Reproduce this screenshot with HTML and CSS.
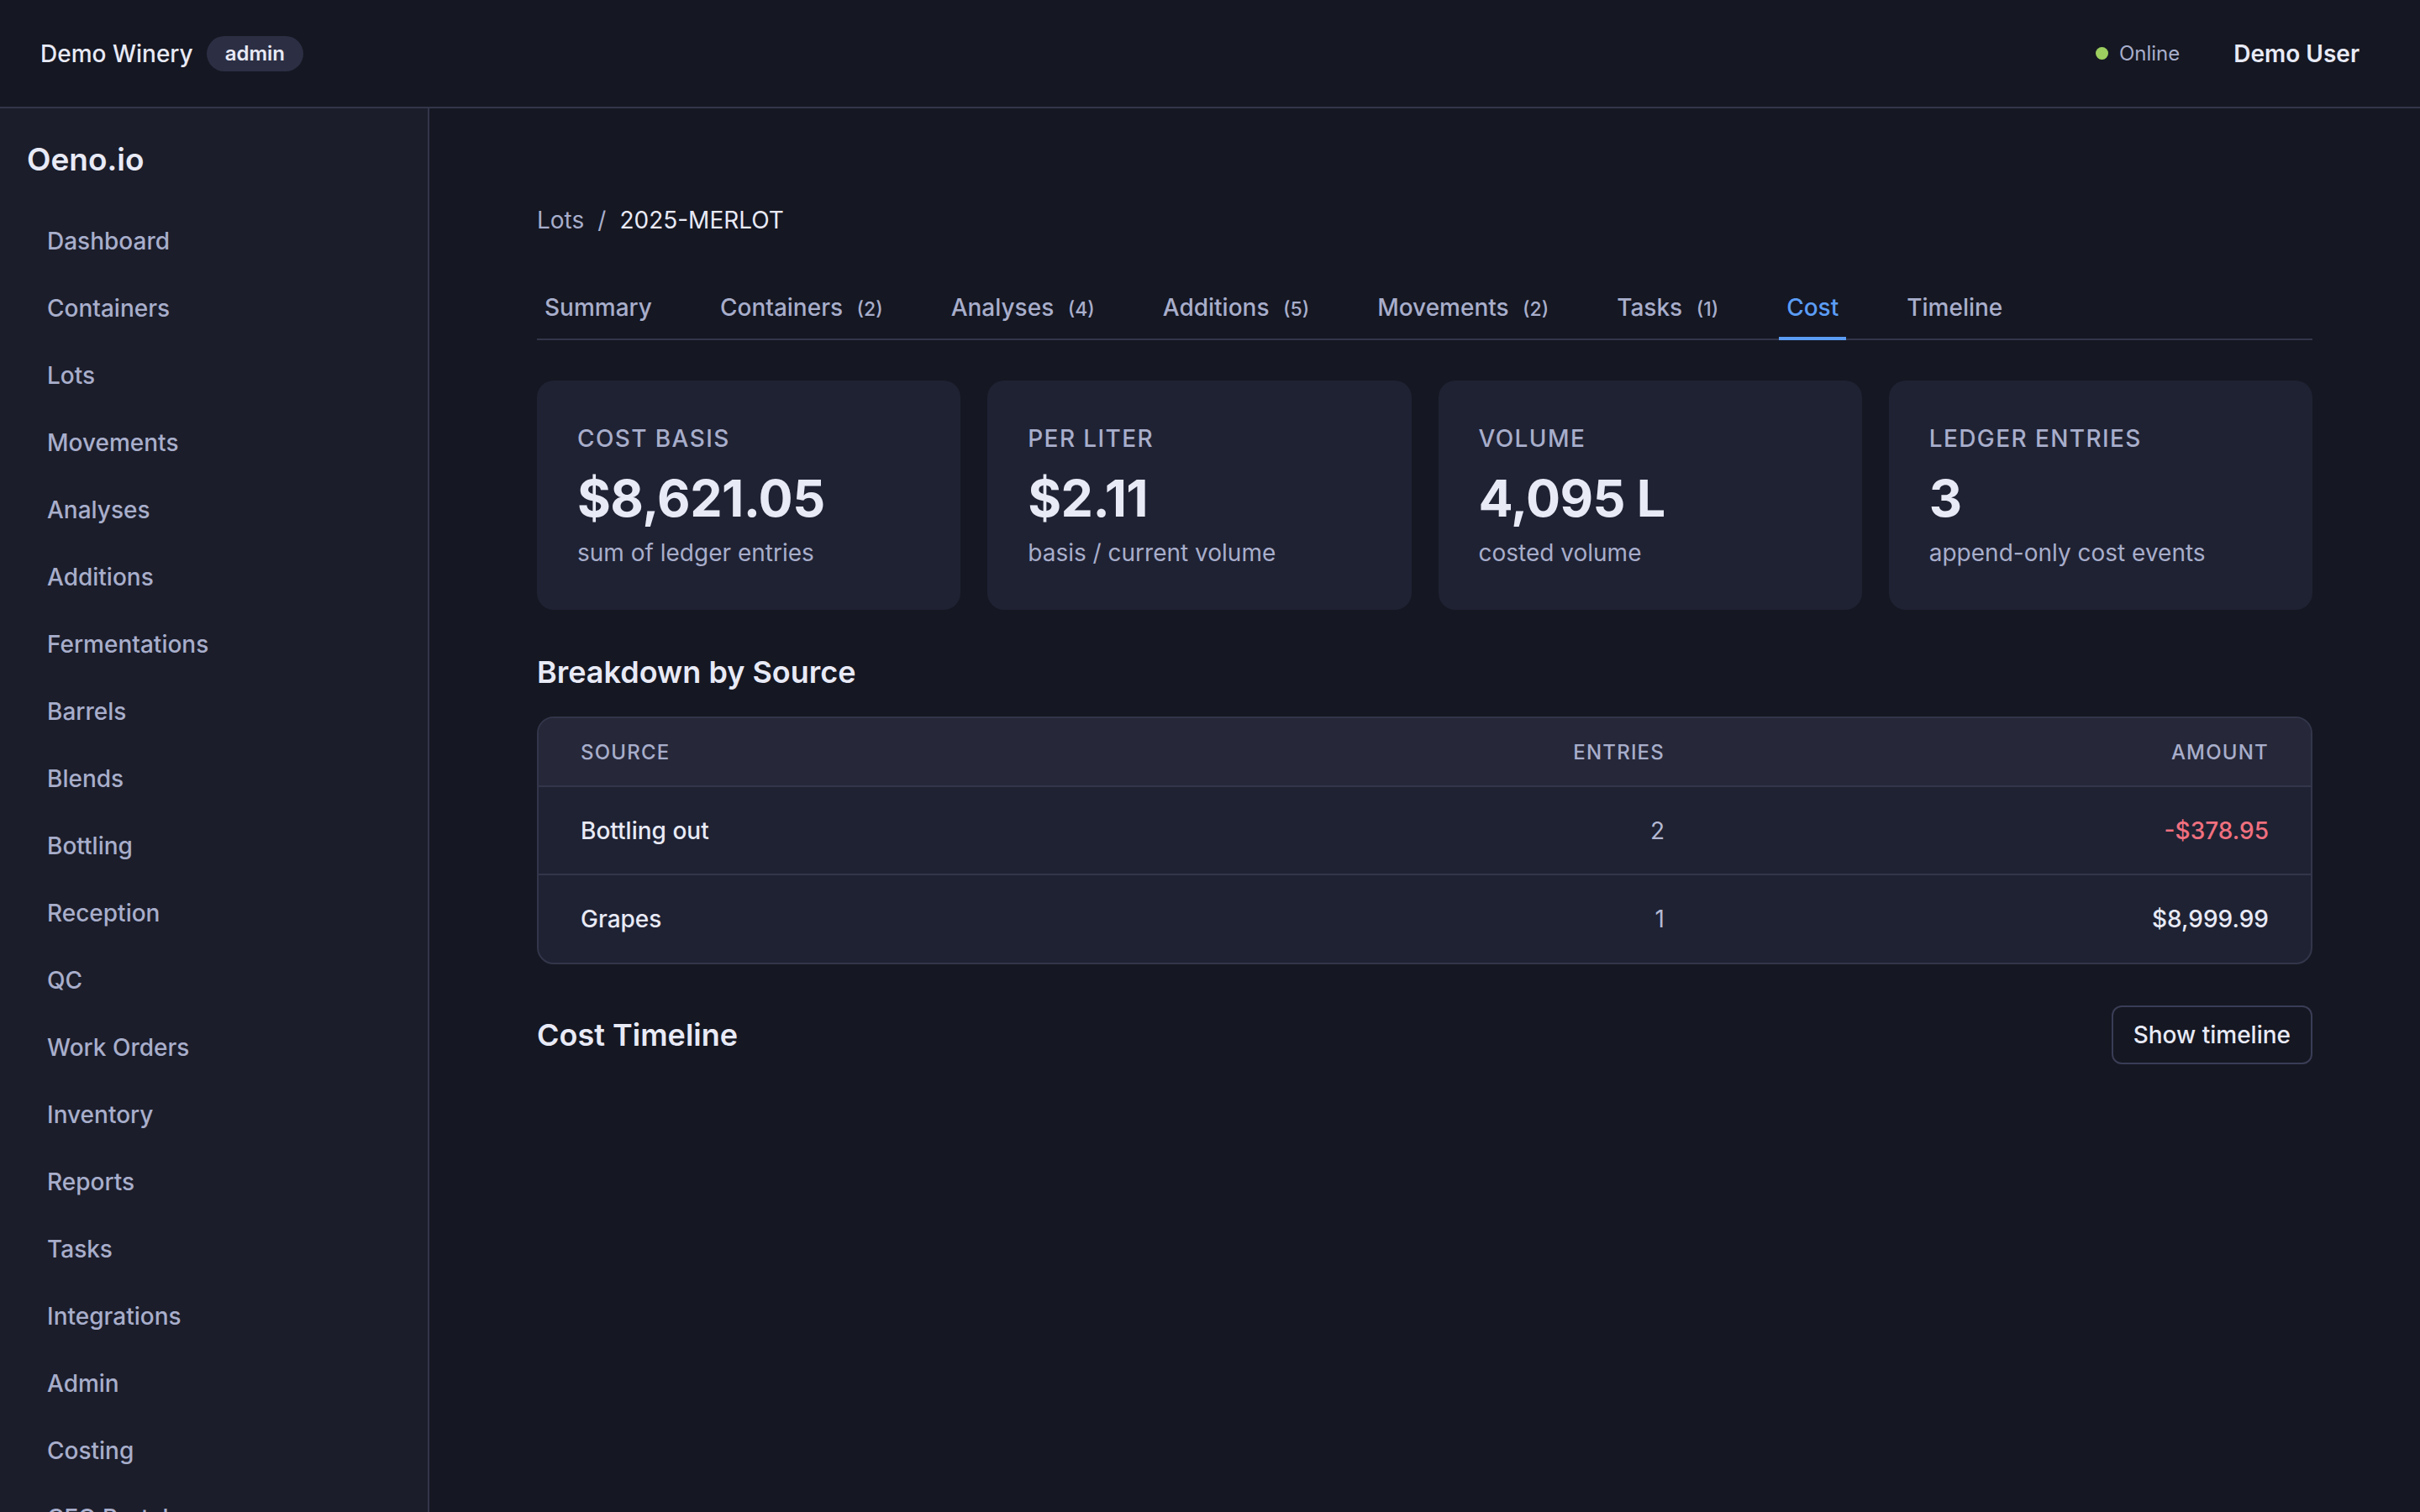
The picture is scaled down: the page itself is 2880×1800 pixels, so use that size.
FILE: index.html
```html
<!DOCTYPE html>
<html lang="en">
<head>
    <meta charset="UTF-8">
    <meta name="viewport" content="width=device-width, initial-scale=1.0">
    <title>2025-MERLOT · Cost · Oeno.io</title>
    <link rel="stylesheet" href="styles.css">
</head>

<body>
<header class="topbar">
    <div class="topbar-left">
        <span class="winery">Demo Winery</span>
        <span class="role-badge">admin</span>
    </div>
    <div class="topbar-right">
        <span class="status"><span class="status-dot"></span>Online</span>
        <button class="user-button">Demo User</button>
    </div>
</header>

<div class="layout">
    <aside class="sidebar">
        <div class="brand">Oeno.io</div>
        <nav class="nav">
            <a href="#">Dashboard</a>
            <a href="#">Containers</a>
            <a href="#">Lots</a>
            <a href="#">Movements</a>
            <a href="#">Analyses</a>
            <a href="#">Additions</a>
            <a href="#">Fermentations</a>
            <a href="#">Barrels</a>
            <a href="#">Blends</a>
            <a href="#">Bottling</a>
            <a href="#">Reception</a>
            <a href="#">QC</a>
            <a href="#">Work Orders</a>
            <a href="#">Inventory</a>
            <a href="#">Reports</a>
            <a href="#">Tasks</a>
            <a href="#">Integrations</a>
            <a href="#">Admin</a>
            <a href="#">Costing</a>
            <a href="#">CFO Portal</a>
        </nav>
    </aside>

    <main class="main">
        <div class="breadcrumb">
            <a href="#">Lots</a>
            <span class="sep">/</span>
            <span class="current">2025-MERLOT</span>
        </div>

        <div class="tabs">
            <a href="#" class="tab">Summary</a>
            <a href="#" class="tab">Containers <span class="count">(2)</span></a>
            <a href="#" class="tab">Analyses <span class="count">(4)</span></a>
            <a href="#" class="tab">Additions <span class="count">(5)</span></a>
            <a href="#" class="tab">Movements <span class="count">(2)</span></a>
            <a href="#" class="tab">Tasks <span class="count">(1)</span></a>
            <a href="#" class="tab active">Cost</a>
            <a href="#" class="tab">Timeline</a>
        </div>

        <div class="stats">
            <div class="stat-card">
                <div class="stat-label">Cost Basis</div>
                <div class="stat-value">$8,621.05</div>
                <div class="stat-note">sum of ledger entries</div>
            </div>
            <div class="stat-card">
                <div class="stat-label">Per Liter</div>
                <div class="stat-value">$2.11</div>
                <div class="stat-note">basis / current volume</div>
            </div>
            <div class="stat-card">
                <div class="stat-label">Volume</div>
                <div class="stat-value">4,095 L</div>
                <div class="stat-note">costed volume</div>
            </div>
            <div class="stat-card">
                <div class="stat-label">Ledger Entries</div>
                <div class="stat-value">3</div>
                <div class="stat-note">append-only cost events</div>
            </div>
        </div>

        <h2 class="section-title">Breakdown by Source</h2>
        <div class="table-wrap">
            <table class="breakdown">
                <thead>
                    <tr>
                        <th>Source</th>
                        <th class="num">Entries</th>
                        <th class="num amount-col">Amount</th>
                    </tr>
                </thead>
                <tbody>
                    <tr>
                        <td class="source">Bottling out</td>
                        <td class="num muted">2</td>
                        <td class="num amount negative">-$378.95</td>
                    </tr>
                    <tr>
                        <td class="source">Grapes</td>
                        <td class="num muted">1</td>
                        <td class="num amount">$8,999.99</td>
                    </tr>
                </tbody>
            </table>
        </div>

        <div class="section-row">
            <h2 class="section-title">Cost Timeline</h2>
            <button class="outline-button">Show timeline</button>
        </div>
    </main>
</div>
</body>
</html>
```

FILE: styles.css
```css
* {
    box-sizing: border-box;
}

body {
    font-family: Inter, "Noto Sans", sans-serif;
    background-color: #151722;
    color: #e8eaf6;
    margin: 0;
    height: 100vh;
    overflow: hidden;
    display: flex;
    flex-direction: column;
}

a {
    color: inherit;
    text-decoration: none;
}

button {
    font-family: inherit;
    cursor: pointer;
}

/* top bar */
.topbar {
    height: 129px;
    flex-shrink: 0;
    display: flex;
    align-items: center;
    justify-content: space-between;
    padding: 0 48px;
    border-bottom: 2px solid #33364a;
}

.topbar-left {
    display: flex;
    align-items: center;
    gap: 16px;
}

.winery {
    font-size: 28px;
    font-weight: 500;
}

.role-badge {
    background: #2c2f44;
    border-radius: 999px;
    padding: 0 22px;
    height: 42px;
    line-height: 42px;
    font-size: 24px;
    font-weight: 600;
}

.topbar-right {
    display: flex;
    align-items: center;
    gap: 40px;
}

.status {
    display: flex;
    align-items: center;
    gap: 13px;
    font-size: 24px;
    color: #a8aecb;
}

.status-dot {
    width: 15px;
    height: 15px;
    border-radius: 50%;
    background: #9ccf5f;
}

.user-button {
    background: none;
    border: none;
    color: #e8eaf6;
    font-size: 28px;
    font-weight: 600;
    padding: 10px 24px;
}

/* layout */
.layout {
    flex: 1;
    display: flex;
    min-height: 0;
}

.sidebar {
    width: 511px;
    flex-shrink: 0;
    background: #1b1d2a;
    border-right: 2px solid #33364a;
    padding: 33px 32px;
    overflow: hidden;
}

.brand {
    font-size: 37px;
    font-weight: 600;
    line-height: 56px;
    margin-bottom: 29px;
}

.nav {
    display: flex;
    flex-direction: column;
}

.nav a {
    font-size: 28px;
    font-weight: 500;
    line-height: 42px;
    padding: 19px 24px;
    color: #a8aecb;
}

.main {
    flex: 1;
    padding: 112px 128px 0 128px;
    overflow: hidden;
}

/* breadcrumb */
.breadcrumb {
    display: flex;
    gap: 16px;
    font-size: 28px;
    line-height: 42px;
    color: #a8aecb;
}

.breadcrumb .current {
    color: #e8eaf6;
}

/* tabs */
.tabs {
    display: flex;
    gap: 63px;
    margin-top: 62px;
    border-bottom: 2px solid #33364a;
}

.tab {
    position: relative;
    padding: 0 9px 14px 9px;
    font-size: 28px;
    font-weight: 500;
    line-height: 42px;
    color: #a8aecb;
}

.tab .count {
    font-size: 23px;
    margin-left: 9px;
}

.tab.active {
    color: #5b9df5;
}

.tab.active::after {
    content: "";
    position: absolute;
    left: 0;
    right: 0;
    bottom: -2px;
    height: 4px;
    background: #5b9df5;
}

/* stat cards */
.stats {
    display: grid;
    grid-template-columns: repeat(4, 1fr);
    gap: 32px;
    margin-top: 48px;
}

.stat-card {
    background: #1f2233;
    border-radius: 20px;
    padding: 49px 48px 47px 48px;
}

.stat-label {
    font-size: 28px;
    font-weight: 500;
    line-height: 40px;
    letter-spacing: 0.05em;
    text-transform: uppercase;
    color: #a8aecb;
}

.stat-value {
    margin-top: 14px;
    font-size: 61px;
    font-weight: 700;
    line-height: 74px;
    letter-spacing: -0.01em;
}

.stat-note {
    margin-top: 7px;
    font-size: 28px;
    line-height: 42px;
    color: #a8aecb;
}

/* sections */
.section-title {
    margin: 49px 0 0 0;
    font-size: 36px;
    font-weight: 600;
    line-height: 50px;
}

.table-wrap {
    margin-top: 28px;
    border: 2px solid #33364a;
    border-radius: 20px;
    overflow: hidden;
    background: #1f2233;
}

.breakdown {
    width: 100%;
    border-collapse: collapse;
}

.breakdown th {
    background: #262839;
    font-size: 24px;
    font-weight: 500;
    letter-spacing: 0.05em;
    text-transform: uppercase;
    text-align: left;
    color: #a8aecb;
    height: 81px;
    padding: 0 50px;
    border-bottom: 2px solid #33364a;
}

.breakdown td {
    font-size: 28px;
    height: 105px;
    padding: 0 50px;
}

.breakdown tbody tr + tr td {
    border-top: 2px solid #33364a;
}

.breakdown .num {
    text-align: right;
}

.breakdown .amount-col {
    width: 719px;
}

.source {
    font-weight: 500;
}

.muted {
    color: #b4b9d2;
}

.amount {
    font-weight: 500;
}

.negative {
    color: #f0707f;
}

.section-row {
    display: flex;
    align-items: center;
    justify-content: space-between;
    margin-top: 49px;
}

.section-row .section-title {
    margin: 0;
}

.outline-button {
    background: none;
    border: 2px solid #3a3d55;
    border-radius: 12px;
    color: #e8eaf6;
    font-size: 28px;
    font-weight: 500;
    height: 70px;
    padding: 0 24px;
}
```
